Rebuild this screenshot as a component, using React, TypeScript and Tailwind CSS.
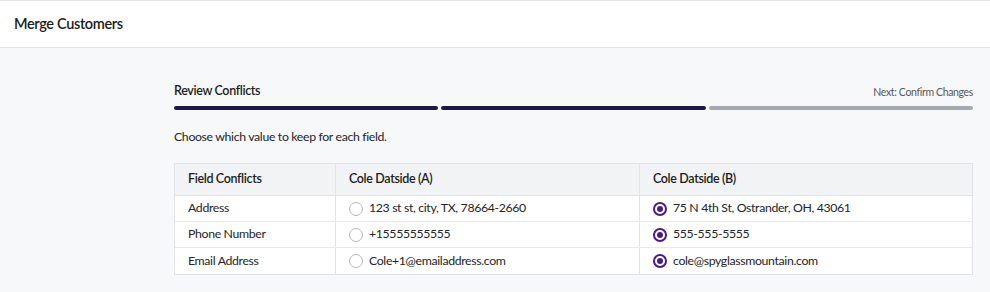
import React from 'react';

type Row = { field: string; a: string; b: string };

const rows: Row[] = [
  { field: 'Address', a: '123 st st, city, TX, 78664-2660', b: '75 N 4th St, Ostrander, OH, 43061' },
  { field: 'Phone Number', a: '+15555555555', b: '555-555-5555' },
  { field: 'Email Address', a: 'Cole+1@emailaddress.com', b: 'cole@spyglassmountain.com' },
];

function Radio({ checked }: { checked: boolean }) {
  if (checked) {
    return (
      <span className="w-[14px] h-[14px] rounded-full border-[2px] border-[#4b1a8c] flex items-center justify-center shrink-0">
        <span className="w-[6px] h-[6px] rounded-full bg-[#4b1a8c]" />
      </span>
    );
  }
  return <span className="w-[14px] h-[14px] rounded-full border border-[#b4b7bf] bg-white shrink-0" />;
}

export default function App() {
  return (
    <div
      className="w-[990px] h-[292px] bg-[#f7f8fa] overflow-hidden text-[#1b1c20] tracking-[-0.35px]"
      style={{ fontFamily: 'Lato, "Noto Sans", sans-serif' }}
    >
      {/* Header */}
      <div className="h-[48px] bg-white border-t border-b border-[#e3e5ea] flex items-center px-[14px]">
        <h1 className="text-[14.5px] font-semibold">Merge Customers</h1>
      </div>

      <div className="pl-[174px] pr-[17px]">
        {/* Stepper */}
        <div className="flex items-end justify-between pt-[34px]">
          <span className="text-[12.5px] font-semibold">Review Conflicts</span>
          <span className="text-[10.5px] text-[#55575d]">Next: Confirm Changes</span>
        </div>
        <div className="flex gap-[3px] mt-[5px]">
          <div className="flex-1 h-[4px] rounded-full bg-[#1b1748]" />
          <div className="flex-1 h-[4px] rounded-full bg-[#1b1748]" />
          <div className="flex-1 h-[4px] rounded-full bg-[#a4a9b3]" />
        </div>

        <p className="text-[12.3px] text-[#24252a] mt-[18px]">Choose which value to keep for each field.</p>

        {/* Table */}
        <div className="mt-[17px] border border-[#e1e3e8] bg-white text-[12.3px]">
          <div className="grid grid-cols-[160px_304px_1fr] h-[32px] bg-[#f2f3f5] border-b border-[#e1e3e8] font-semibold text-[12.5px]">
            <div className="flex items-center px-[13px]">Field Conflicts</div>
            <div className="flex items-center px-[13px] border-l border-[#e1e3e8]">Cole Datside (A)</div>
            <div className="flex items-center px-[13px] border-l border-[#e1e3e8]">Cole Datside (B)</div>
          </div>
          {rows.map((r, i) => (
            <div
              key={r.field}
              className={`grid grid-cols-[160px_304px_1fr] h-[26px] ${i < rows.length - 1 ? 'border-b border-[#e8e9ed]' : ''}`}
            >
              <div className="flex items-center px-[13px] text-[#24252a]">{r.field}</div>
              <div className="flex items-center gap-[6px] px-[13px] border-l border-[#e1e3e8] text-[#24252a]">
                <Radio checked={false} />
                {r.a}
              </div>
              <div className="flex items-center gap-[6px] px-[13px] border-l border-[#e1e3e8] text-[#24252a]">
                <Radio checked />
                {r.b}
              </div>
            </div>
          ))}
        </div>
      </div>
    </div>
  );
}
